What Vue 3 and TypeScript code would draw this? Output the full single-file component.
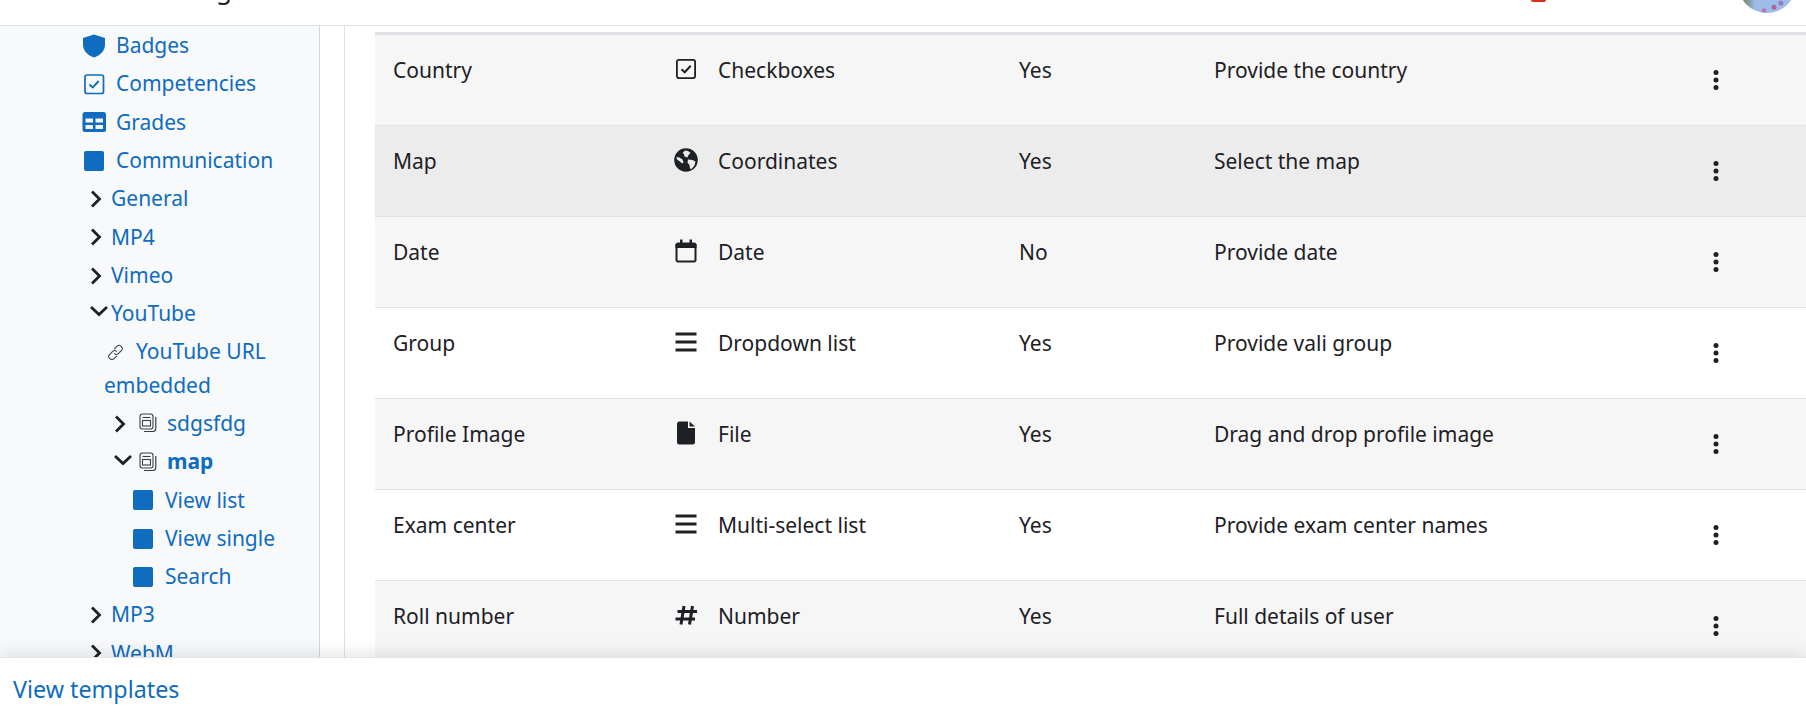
<script setup lang="ts">
type Side = { label: string; kind: string; cls: string; bold?: boolean }

const sideItems: Side[] = [
  { label: 'Badges', kind: 'shield', cls: 'lv1' },
  { label: 'Competencies', kind: 'check', cls: 'lv1' },
  { label: 'Grades', kind: 'table', cls: 'lv1' },
  { label: 'Communication', kind: 'square', cls: 'lv1' },
  { label: 'General', kind: 'right', cls: 'lv2' },
  { label: 'MP4', kind: 'right', cls: 'lv2' },
  { label: 'Vimeo', kind: 'right', cls: 'lv2' },
  { label: 'YouTube', kind: 'down', cls: 'lv2' },
  { label: 'YouTube URL embedded', kind: 'link', cls: 'lv3' },
  { label: 'sdgsfdg', kind: 'right-db', cls: 'lv4' },
  { label: 'map', kind: 'down-db', cls: 'lv4', bold: true },
  { label: 'View list', kind: 'square', cls: 'lv5' },
  { label: 'View single', kind: 'square', cls: 'lv5' },
  { label: 'Search', kind: 'square', cls: 'lv5' },
  { label: 'MP3', kind: 'right', cls: 'lv2' },
  { label: 'WebM', kind: 'right', cls: 'lv2' }
]

const rows = [
  { name: 'Country', icon: 'check', type: 'Checkboxes', req: 'Yes', desc: 'Provide the country', tone: 'odd' },
  { name: 'Map', icon: 'globe', type: 'Coordinates', req: 'Yes', desc: 'Select the map', tone: 'hover' },
  { name: 'Date', icon: 'calendar', type: 'Date', req: 'No', desc: 'Provide date', tone: 'odd' },
  { name: 'Group', icon: 'list', type: 'Dropdown list', req: 'Yes', desc: 'Provide vali group', tone: 'even' },
  { name: 'Profile Image', icon: 'file', type: 'File', req: 'Yes', desc: 'Drag and drop profile image', tone: 'odd' },
  { name: 'Exam center', icon: 'list', type: 'Multi-select list', req: 'Yes', desc: 'Provide exam center names', tone: 'even' },
  { name: 'Roll number', icon: 'hash', type: 'Number', req: 'Yes', desc: 'Full details of user', tone: 'odd' }
]
</script>

<template>
  <div class="page">
    <header class="topbar">
      <span class="crumb">g</span>
      <span class="alert"></span>
      <span class="avatar"></span>
    </header>

    <div class="body">
      <nav class="sidebar">
        <div v-for="item in sideItems" :key="item.label" class="side-item" :class="item.cls">
          <svg v-if="item.kind === 'right' || item.kind === 'right-db'" class="chev" viewBox="0 0 13 20">
            <path d="M3 2.500l7.500 7.500L3 17.500" fill="none" stroke="#1d2125" stroke-width="2.800" />
          </svg>
          <svg v-if="item.kind === 'down' || item.kind === 'down-db'" class="chev down" viewBox="0 0 20 14">
            <path d="M2 3l8 7.500L18 3" fill="none" stroke="#1d2125" stroke-width="2.800" />
          </svg>
          <svg v-if="item.kind === 'right-db' || item.kind === 'down-db'" class="db" viewBox="0 0 18 19">
            <rect x="1" y="1" width="13" height="15" rx="2.500" fill="none" stroke="#3a3f44" stroke-width="1.100" />
            <path d="M16.800 4v11.500a3 3 0 0 1-3 3H5" fill="none" stroke="#3a3f44" stroke-width="1.200" />
            <path d="M3.500 4.500h8" stroke="#3a3f44" stroke-width="1.100" />
            <rect x="3.500" y="7.500" width="8" height="5.500" fill="none" stroke="#3a3f44" stroke-width="1.100" />
          </svg>
          <svg v-if="item.kind === 'shield'" class="ico" viewBox="0 0 24 24">
            <path d="M12 .5l11 3.500v6.500c0 6-4.500 11-11 13-6.500-2-11-7-11-13V4z" fill="#0f6cbf" />
          </svg>
          <svg v-if="item.kind === 'check'" class="ico" viewBox="0 0 24 24">
            <rect x="3" y="3" width="18.500" height="18.500" rx="2" fill="none" stroke="#0f6cbf" stroke-width="1.700" />
            <path d="M7.500 12.500l3.200 3 6-6.500" fill="none" stroke="#0f6cbf" stroke-width="1.900" />
          </svg>
          <svg v-if="item.kind === 'table'" class="ico" viewBox="0 0 24 24">
            <path fill-rule="evenodd" d="M3 2h18.500A2.500 2.500 0 0 1 24 4.500v15a2.500 2.500 0 0 1-2.500 2.500H3A2.500 2.500 0 0 1 .5 19.500v-15A2.500 2.500 0 0 1 3 2zM3.500 8.500v4h7.500v-4zm10 0v4H21v-4zM3.500 15v4H11v-4zm10 0v4H21v-4z" fill="#0f6cbf" />
          </svg>
          <span v-if="item.kind === 'square'" class="sq"></span>
          <svg v-if="item.kind === 'link'" class="link-ico" viewBox="0 0 18 18">
            <g fill="none" stroke="#3a3f44" stroke-width="1.100">
              <path d="M7.500 5.500l3-3a3.200 3.200 0 0 1 4.700 4.500l-3 3a3.200 3.200 0 0 1-4.500 0" />
              <path d="M10.500 12.500l-3 3A3.200 3.200 0 0 1 2.800 11l3-3a3.200 3.200 0 0 1 4.500 0" />
            </g>
          </svg>
          <a class="side-link" :class="{ strong: item.bold }">{{ item.label }}</a>
        </div>
      </nav>

      <div class="gutter"></div>

      <main class="content">
        <div class="table">
          <div v-for="row in rows" :key="row.name" class="row" :class="row.tone">
            <div class="c-name">{{ row.name }}</div>
            <div class="c-type">
              <svg v-if="row.icon === 'check'" class="t-ico" viewBox="0 0 24 24">
                <rect x="2.900" y="2.900" width="18.200" height="18.200" rx="2" fill="none" stroke="#1d2125" stroke-width="1.800" />
                <path d="M7.500 12.300l3.200 3 6-6.500" fill="none" stroke="#1d2125" stroke-width="2" />
              </svg>
              <svg v-if="row.icon === 'globe'" class="t-ico" viewBox="0 0 24 24">
                <circle cx="12" cy="12" r="11.800" fill="#1d2125" />
                <path d="M11 2.500l3 .5 2.500 2-2 2-1 2.500-3-1-.5-2.500-1.500-1zM14 11.500l4.500.5 3 1.500-1 4-3 3.500-1.500-.5-.5-3.500-2-2.500zM2.500 9l3 .5 3 2 1 3-1.500 1-2-2-3-2z" fill="#ebebec" />
              </svg>
              <svg v-if="row.icon === 'calendar'" class="t-ico" viewBox="0 0 24 24">
                <path d="M6 .5h2.500v3h7v-3H18v3h2A2.500 2.500 0 0 1 22.500 6v3h-21V6A2.500 2.500 0 0 1 4 3.500h2z" fill="#1d2125" />
                <path d="M2.500 6h19v15.500a1.500 1.500 0 0 1-1.500 1H4a1.500 1.500 0 0 1-1.500-1z" fill="none" stroke="#1d2125" stroke-width="2" />
              </svg>
              <svg v-if="row.icon === 'list'" class="t-ico" viewBox="0 0 24 24">
                <path d="M1.500 4h21M1.500 12h21M1.500 20h21" stroke="#1d2125" stroke-width="3" />
              </svg>
              <svg v-if="row.icon === 'file'" class="t-ico" viewBox="0 0 24 24">
                <path d="M5.500.5h8.500v6.500h7v14a2.500 2.500 0 0 1-2.500 2.500h-13A2.500 2.500 0 0 1 3 21V3A2.500 2.500 0 0 1 5.500.5zM15.500.5l5.500 5h-5.500z" fill="#1d2125" />
              </svg>
              <svg v-if="row.icon === 'hash'" class="t-ico" viewBox="0 0 24 24">
                <path d="M10 3L7 21.500M18.500 3l-3 18.500M3.500 8.500h19.500M1.500 16h19.500" fill="none" stroke="#1d2125" stroke-width="3" />
              </svg>
              <span>{{ row.type }}</span>
            </div>
            <div class="c-req">{{ row.req }}</div>
            <div class="c-desc">{{ row.desc }}</div>
            <div class="c-act">
              <svg class="dots" viewBox="0 0 6 20">
                <circle cx="3" cy="2.500" r="2.500" fill="#1d2125" />
                <circle cx="3" cy="10" r="2.500" fill="#1d2125" />
                <circle cx="3" cy="17.500" r="2.500" fill="#1d2125" />
              </svg>
            </div>
          </div>
        </div>
      </main>
    </div>

    <footer class="footer">
      <a class="foot-link">View templates</a>
    </footer>
  </div>
</template>

<style>
html, body { margin: 0; background: #fff; }
</style>

<style scoped>
.page {
  width: 1806px;
  height: 723px;
  overflow: hidden;
  display: flex;
  flex-direction: column;
  background: #fff;
  font-family: "Noto Sans", "Liberation Sans", sans-serif;
  font-size: 21px;
  color: #1d2125;
}
.topbar {
  height: 25px;
  flex: none;
  border-bottom: 1px solid #dee2e6;
  display: flex;
  overflow: hidden;
  align-items: flex-start;
}
.crumb {
  margin-left: 216px;
  margin-top: -24px;
  line-height: 26px;
  font-size: 26px;
}
.alert {
  width: 15px;
  height: 2px;
  margin-left: auto;
  margin-right: 192px;
  background: #d5301d;
  border-radius: 0 0 4px 4px;
}
.avatar {
  width: 58px;
  height: 58px;
  margin-right: 10px;
  margin-top: -45px;
  border-radius: 50%;
  background:
    radial-gradient(circle at 62% 90%, #a9698f 0 2px, transparent 3px),
    radial-gradient(circle at 45% 96%, #b37fa8 0 2px, transparent 3px),
    radial-gradient(circle at 74% 83%, #8d7fb8 0 2px, transparent 3px),
    linear-gradient(90deg, #7b8f82 0 14%, #9dbcea 30% 100%);
}
.body {
  flex: 1;
  min-height: 0;
  display: flex;
}
.sidebar {
  width: 319px;
  flex: none;
  padding-top: 0.600px;
  background: #f8f9fa;
  border-right: 1px solid #d5d7da;
  overflow: hidden;
}
.gutter {
  width: 24px;
  flex: none;
  border-right: 1px solid #dee2e6;
}
.side-item {
  display: flex;
  align-items: center;
  min-height: 38.3px;
  line-height: 33.4px;
  color: #0f6cbf;
}
.lv1 { padding-left: 82px; }
.lv2 { padding-left: 89px; }
.lv3 { padding-left: 104px; display: block; padding-top: 2.400px; padding-bottom: 2.400px; }
.lv4 { padding-left: 113px; }
.lv5 { padding-left: 131px; }
.side-link { color: #0f6cbf; }
.strong { font-weight: 700; }
.ico { width: 24px; height: 24px; flex: none; margin-right: 10px; }
.sq {
  width: 20px;
  height: 20px;
  flex: none;
  margin: 0 12px 0 2px;
  background: #0f6cbf;
  border-radius: 2px;
}
.lv5 .sq { margin-left: 1.500px; margin-right: 12.500px; }
.chev { width: 13px; height: 20px; flex: none; margin-right: 9px; }
.chev.down { width: 20px; height: 14px; margin-right: 2px; margin-top: -5px; }
.db { width: 18px; height: 19px; flex: none; margin-right: 10px; margin-top: -2px; }
.lv4 .chev { margin-right: 13px; }
.lv4 .chev.down { margin-right: 6px; }
.link-ico { display: inline-block; width: 17px; height: 17px; margin: 0 12px 0 3px; vertical-align: -2px; }
.content {
  flex: 1;
  min-width: 0;
  padding: 6px 0 0 30px;
  overflow: hidden;
}
.table { border-top: 3px solid #dee2e6; }
.row {
  display: flex;
  height: 90px;
  border-bottom: 1px solid #dee2e6;
  line-height: 28px;
}
.row > div { padding-top: 21px; }
.odd { background: #f6f6f7; }
.hover { background: #ececed; }
.even { background: #fff; }
.c-name { width: 299px; padding-left: 18px; box-sizing: border-box; }
.c-type { width: 344px; display: flex; align-items: flex-start; }
.t-ico { width: 24px; height: 24px; flex: none; margin: 1px 20px 0 0; }
.c-req { width: 196px; padding-left: 1px; box-sizing: border-box; }
.c-desc { width: 499px; }
.row > .c-act { flex: 1; padding-top: 0; display: flex; align-items: center; }
.dots { width: 6px; height: 20px; }
.footer {
  flex: none;
  height: 66px;
  background: #fff;
  position: relative;
  display: flex;
  align-items: center;
  padding: 0 0 4px 13px;
  box-shadow: 0 -2px 18px rgba(0, 0, 0, 0.12);
  border-top: 1px solid #e4e5e6;
  box-sizing: border-box;
}
.foot-link { color: #0f6cbf; font-size: 23.300px; }
</style>
